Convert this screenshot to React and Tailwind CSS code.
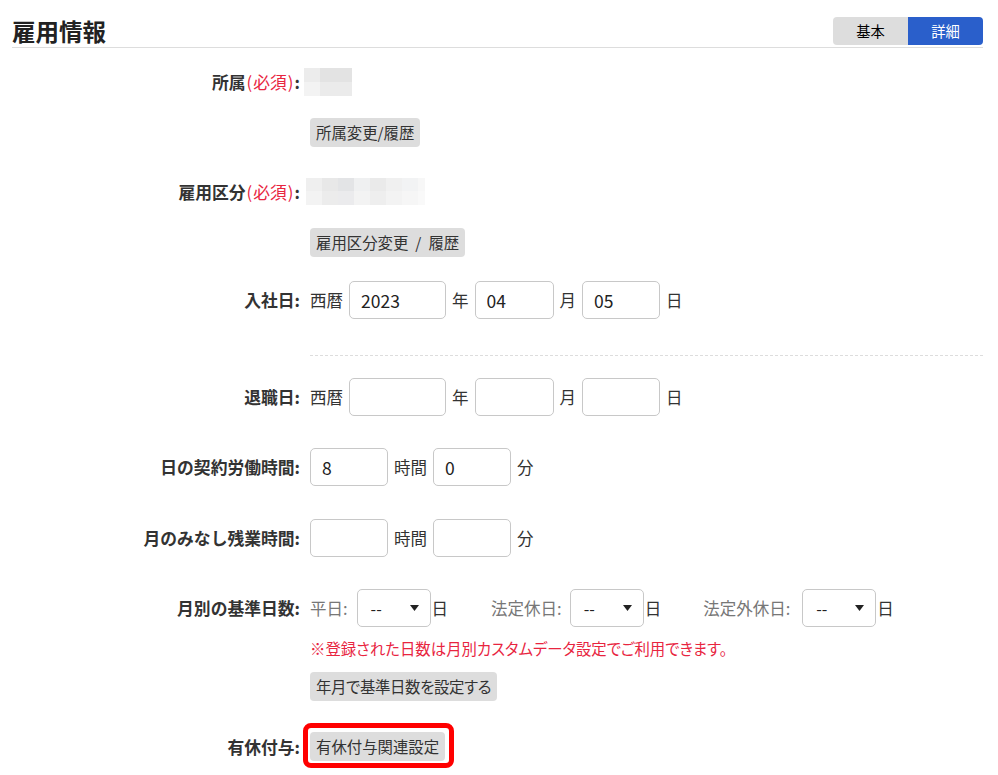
import React from "react";

function Label({ children }) {
  return (
    <div className="w-[288px] shrink-0 text-right font-bold text-[16.8px] leading-[24px] text-[#333]">
      {children}
    </div>
  );
}

function Req() {
  return (
    <span className="font-normal text-[#e8253f]">
      <span className="mx-[1px]">(</span>必須<span className="mx-[1px]">)</span>
    </span>
  );
}

function Row({ label, children, className = "" }) {
  return (
    <div className={"flex items-center " + className}>
      <Label>{label}</Label>
      <div className="ml-[10px] flex items-center">{children}</div>
    </div>
  );
}

function Btn({ children, className = "" }) {
  return (
    <div
      className={
        "h-[29px] px-[6px] rounded-[4px] bg-[#dddddd] text-[#333] text-[15.4px] leading-[29px] whitespace-nowrap [font-feature-settings:'palt'] " +
        className
      }
    >
      {children}
    </div>
  );
}

function Inp({ w, value = "" }) {
  return (
    <input
      readOnly
      value={value}
      className={
        "h-[38px] rounded-[5px] border border-[#c8c8c8] bg-white px-[11px] text-[17.5px] text-[#222] outline-none " +
        w
      }
    />
  );
}

function Unit({ children, className = "" }) {
  return <span className={"text-[16.5px] text-[#333] " + className}>{children}</span>;
}

function Sel() {
  return (
    <div className="h-[38px] w-[74px] rounded-[5px] border border-[#c8c8c8] bg-white flex items-center justify-between pl-[13px] pr-[11px]">
      <span className="text-[16px] text-[#222]">--</span>
      <svg width="9" height="6" viewBox="0 0 9 6">
        <path d="M0 0 H9 L4.5 6 Z" fill="#222" />
      </svg>
    </div>
  );
}

const blurTop = ["#efefef", "#e8e8e8", "#e3e4e6", "#eff0f1", "#eaeaea", "#f0f0f0", "#f2f3f4", "#f7f7f7"];
const blurBot = ["#f3f3f3", "#ececec", "#ebebed", "#f3f3f3", "#eeeeee", "#f3f3f3", "#f6f6f6", "#f9f9f9"];

export default function App() {
  return (
    <div className="min-h-[775px] bg-white pl-[12px] pr-[15px] font-['Noto_Sans_CJK_JP','Noto_Sans',sans-serif] text-[#333]">
      {/* Header */}
      <div className="flex items-center justify-between border-b border-[#dddddd] pt-[17px] pb-[2px]">
        <h1 className="text-[23.5px] font-bold leading-[28px] text-[#222]">雇用情報</h1>
        <div className="flex h-[28px] overflow-hidden rounded-[4px] text-[14.3px]">
          <div className="w-[75px] bg-[#dddddd] text-black flex items-center justify-center">基本</div>
          <div className="w-[75px] bg-[#2a5fcb] text-white flex items-center justify-center">詳細</div>
        </div>
      </div>

      {/* 所属 */}
      <Row className="mt-[20px]" label={<>所属<Req />:</>}>
        <div className="-ml-[6px] grid h-[28px] w-[48px] grid-cols-[16px_32px] grid-rows-2">
          <div className="bg-[#ececec]" />
          <div className="bg-[#e3e3e3]" />
          <div className="bg-[#f3f3f3]" />
          <div className="bg-[#ebebeb]" />
        </div>
      </Row>
      <div className="mt-[22px] flex">
        <div className="ml-[298px]">
          <Btn>所属変更/履歴</Btn>
        </div>
      </div>

      {/* 雇用区分 */}
      <Row className="mt-[31px]" label={<>雇用区分<Req />:</>}>
        <div className="-ml-[4px] flex h-[27px] w-[119px] flex-col overflow-hidden">
          <div className="flex h-[13px]">
            {blurTop.map((c, i) => (
              <div key={i} className="h-full w-[16px] shrink-0" style={{ background: c }} />
            ))}
          </div>
          <div className="flex h-[14px]">
            {blurBot.map((c, i) => (
              <div key={i} className="h-full w-[16px] shrink-0" style={{ background: c }} />
            ))}
          </div>
        </div>
      </Row>
      <div className="mt-[23px] flex">
        <div className="ml-[298px]">
          <Btn>
            雇用区分変更<span className="mx-[7px]">/</span>履歴
          </Btn>
        </div>
      </div>

      {/* 入社日 */}
      <Row className="mt-[24px]" label="入社日:">
        <div className="flex items-center gap-[6px]">
          <Unit>西暦</Unit>
          <Inp w="w-[97px]" value="2023" />
          <Unit>年</Unit>
          <Inp w="w-[79px]" value="04" />
          <Unit>月</Unit>
          <Inp w="w-[78px]" value="05" />
          <Unit>日</Unit>
        </div>
      </Row>

      <div className="mt-[36px] ml-[298px] border-t border-dashed border-[#dddddd]" />

      {/* 退職日 */}
      <Row className="mt-[22px]" label="退職日:">
        <div className="flex items-center gap-[6px]">
          <Unit>西暦</Unit>
          <Inp w="w-[97px]" />
          <Unit>年</Unit>
          <Inp w="w-[79px]" />
          <Unit>月</Unit>
          <Inp w="w-[78px]" />
          <Unit>日</Unit>
        </div>
      </Row>

      {/* 日の契約労働時間 */}
      <Row className="mt-[32px]" label="日の契約労働時間:">
        <div className="flex items-center gap-[6px]">
          <Inp w="w-[78px]" value="8" />
          <Unit>時間</Unit>
          <Inp w="w-[78px]" value="0" />
          <Unit>分</Unit>
        </div>
      </Row>

      {/* 月のみなし残業時間 */}
      <Row className="mt-[33px]" label="月のみなし残業時間:">
        <div className="flex items-center gap-[6px]">
          <Inp w="w-[78px]" />
          <Unit>時間</Unit>
          <Inp w="w-[78px]" />
          <Unit>分</Unit>
        </div>
      </Row>

      {/* 月別の基準日数 */}
      <Row className="mt-[32px]" label="月別の基準日数:">
        <div className="flex items-center">
          <span className="text-[16.5px] text-[#777]">平日:</span>
          <div className="ml-[9px]">
            <Sel />
          </div>
          <Unit className="ml-[1px]">日</Unit>
          <span className="ml-[43px] text-[16.5px] text-[#777]">法定休日:</span>
          <div className="ml-[8px]">
            <Sel />
          </div>
          <Unit className="ml-[1px]">日</Unit>
          <span className="ml-[42px] text-[16.5px] text-[#777]">法定外休日:</span>
          <div className="ml-[12px]">
            <Sel />
          </div>
          <Unit className="ml-[1px]">日</Unit>
        </div>
      </Row>
      <div className="mt-[11px] ml-[298px] text-[15.4px] leading-[20px] text-[#e8253f] [font-feature-settings:'palt']">
        ※登録された日数は月別カスタムデータ設定でご利用できます。
      </div>
      <div className="mt-[14px] flex">
        <div className="ml-[298px]">
          <Btn className="tracking-[-0.35px]">年月で基準日数を設定する</Btn>
        </div>
      </div>

      {/* 有休付与 */}
      <Row className="mt-[31px]" label="有休付与:">
        <div className="relative">
          <Btn>有休付与関連設定</Btn>
          <div className="pointer-events-none absolute -left-[7px] -top-[9px] -right-[9px] -bottom-[7px] rounded-[8px] border-[5px] border-[#ff0000]" />
        </div>
      </Row>
    </div>
  );
}
